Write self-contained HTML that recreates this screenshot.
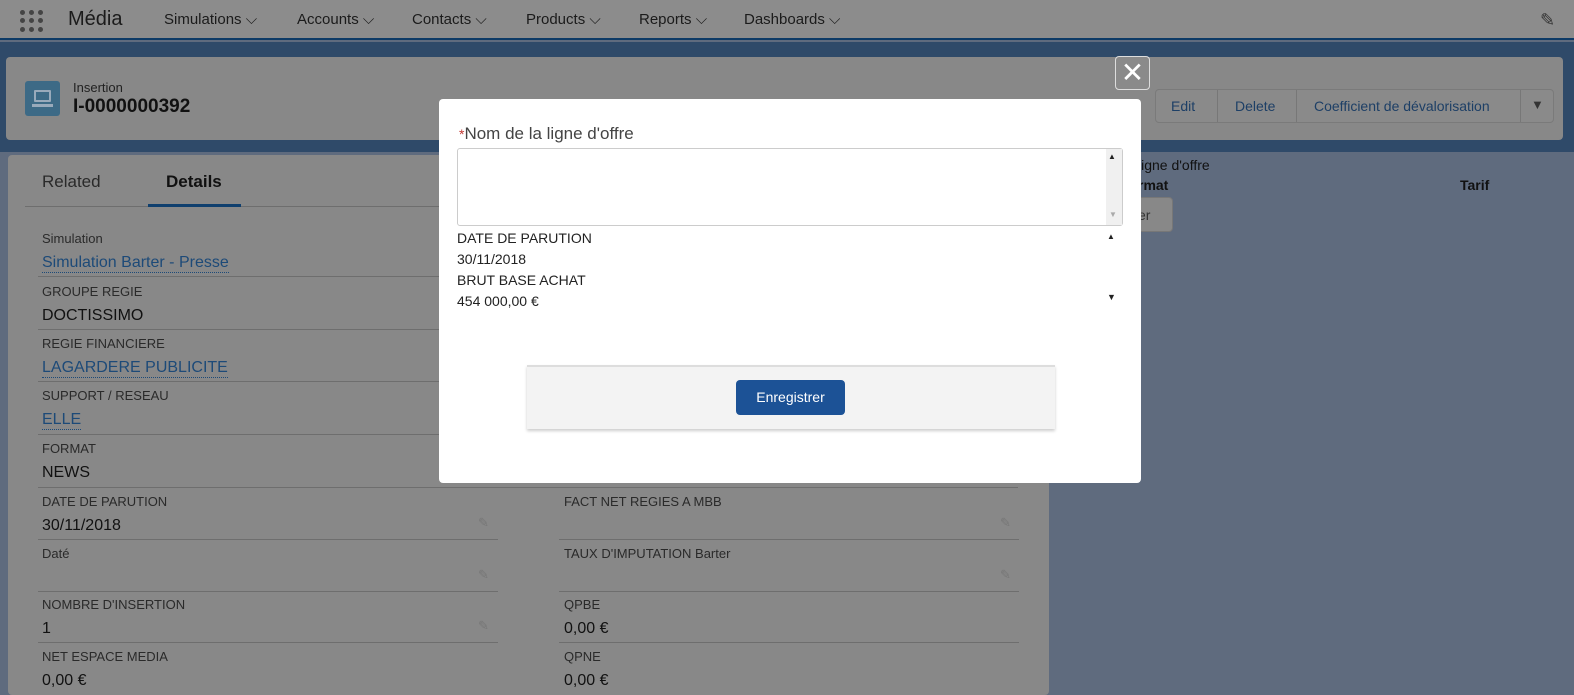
<!DOCTYPE html>
<html><head><meta charset="utf-8"><style>
*{box-sizing:border-box;margin:0;padding:0}
body{width:1574px;height:686px;overflow:hidden;background:#5f6b7e;font-family:"Liberation Sans",sans-serif;position:relative}
.a{position:absolute}
.nav{left:0;top:0;width:1574px;height:40px;background:#8c8c8c;border-bottom:2px solid #0d3a66}
.nav span{position:absolute;top:11px;font-size:15px;color:#1b1b1b}
.strip{left:0;top:42px;width:1574px;height:110px;background:#2f4a69}
.card{background:#888;border-radius:4px}
.lbl{font-size:13px;color:#2a2a2a}
.val{font-size:16px;color:#111}
.lnk{font-size:16px;color:#1d4a78;border-bottom:1px dotted #1d4a78}
.ln{height:1px;background:#6e6e6e}
.pen{font-size:13px;color:#777}
</style></head><body>
<div class="a nav"></div>
<div class="a" style="left:20px;top:10px;width:24px;height:22px;display:grid;grid-template-columns:repeat(3,6px);gap:3px 3px">
<i style="background:#444;border-radius:50%;width:5px;height:5px"></i><i style="background:#444;border-radius:50%;width:5px;height:5px"></i><i style="background:#444;border-radius:50%;width:5px;height:5px"></i><i style="background:#444;border-radius:50%;width:5px;height:5px"></i><i style="background:#444;border-radius:50%;width:5px;height:5px"></i><i style="background:#444;border-radius:50%;width:5px;height:5px"></i><i style="background:#444;border-radius:50%;width:5px;height:5px"></i><i style="background:#444;border-radius:50%;width:5px;height:5px"></i><i style="background:#444;border-radius:50%;width:5px;height:5px"></i></div>
<div class="a" style="left:68px;top:8px;font-size:20px;color:#1b1b1b">Média</div>
<div class="a" style="left:164px;top:11px;font-size:15px;color:#1b1b1b;word-spacing:0">Simulations ⌵</div>
<div class="a" style="left:297px;top:11px;font-size:15px;color:#1b1b1b">Accounts ⌵</div>
<div class="a" style="left:412px;top:11px;font-size:15px;color:#1b1b1b">Contacts ⌵</div>
<div class="a" style="left:526px;top:11px;font-size:15px;color:#1b1b1b">Products ⌵</div>
<div class="a" style="left:639px;top:11px;font-size:15px;color:#1b1b1b">Reports ⌵</div>
<div class="a" style="left:744px;top:11px;font-size:15px;color:#1b1b1b">Dashboards ⌵</div>
<div class="a" style="left:1540px;top:10px;font-size:18px;color:#333">✎</div>
<div class="a strip"></div>
<div class="a card" style="left:6px;top:57px;width:1557px;height:83px"></div>
<div class="a" style="left:25px;top:81px;width:35px;height:35px;background:#3d6a86;border-radius:3px"></div>
<div class="a" style="left:34px;top:90px;width:17px;height:12px;border:2px solid #9ab;border-radius:1px"></div>
<div class="a" style="left:32px;top:104px;width:21px;height:3px;background:#9ab"></div>
<div class="a" style="left:73px;top:80px;font-size:13px;color:#222">Insertion</div>
<div class="a" style="left:73px;top:96px;font-size:19px;font-weight:bold;color:#111">I-0000000392</div>
<div class="a" style="left:1155px;top:89px;width:399px;height:34px;border:1px solid #7a7a7a;border-radius:4px;background:#8a8a8a;font-size:14px;color:#1d3f66">
<span class="a" style="left:15px;top:8px">Edit</span><span class="a" style="left:61px;top:0;width:1px;height:32px;background:#777"></span>
<span class="a" style="left:79px;top:8px">Delete</span><span class="a" style="left:140px;top:0;width:1px;height:32px;background:#777"></span>
<span class="a" style="left:158px;top:8px">Coefficient de dévalorisation</span><span class="a" style="left:364px;top:0;width:1px;height:32px;background:#777"></span>
<span class="a" style="left:375px;top:7px;color:#333;font-size:13px">▼</span></div>
<div class="a card" style="left:8px;top:155px;width:1041px;height:540px"></div>
<div class="a" style="left:42px;top:172px;font-size:17px;color:#2a2a2a">Related</div>
<div class="a" style="left:166px;top:172px;font-size:17px;font-weight:bold;color:#111">Details</div>
<div class="a ln" style="left:25px;top:206px;width:1000px"></div>
<div class="a" style="left:148px;top:204px;width:93px;height:3px;background:#0f3f6e"></div>
<div class="a lbl" style="left:42px;top:231px">Simulation</div><div class="a lnk" style="left:42px;top:254px">Simulation Barter - Presse</div><div class="a ln" style="left:38px;top:276px;width:460px"></div>
<div class="a lbl" style="left:42px;top:284px">GROUPE REGIE</div><div class="a val" style="left:42px;top:307px">DOCTISSIMO</div><div class="a ln" style="left:38px;top:329px;width:460px"></div>
<div class="a lbl" style="left:42px;top:336px">REGIE FINANCIERE</div><div class="a lnk" style="left:42px;top:359px">LAGARDERE PUBLICITE</div><div class="a ln" style="left:38px;top:381px;width:460px"></div>
<div class="a lbl" style="left:42px;top:388px">SUPPORT / RESEAU</div><div class="a lnk" style="left:42px;top:411px">ELLE</div><div class="a ln" style="left:38px;top:434px;width:460px"></div>
<div class="a lbl" style="left:42px;top:441px">FORMAT</div><div class="a val" style="left:42px;top:464px">NEWS</div><div class="a ln" style="left:38px;top:487px;width:980px"></div>
<div class="a lbl" style="left:42px;top:494px">DATE DE PARUTION</div><div class="a val" style="left:42px;top:517px">30/11/2018</div><div class="a pen" style="left:478px;top:515px">✎</div><div class="a ln" style="left:38px;top:539px;width:460px"></div>
<div class="a lbl" style="left:564px;top:494px">FACT NET REGIES A MBB</div><div class="a pen" style="left:1000px;top:515px">✎</div><div class="a ln" style="left:559px;top:539px;width:460px"></div>
<div class="a lbl" style="left:42px;top:546px">Daté</div><div class="a pen" style="left:478px;top:567px">✎</div><div class="a ln" style="left:38px;top:591px;width:460px"></div>
<div class="a lbl" style="left:564px;top:546px">TAUX D'IMPUTATION Barter</div><div class="a pen" style="left:1000px;top:567px">✎</div><div class="a ln" style="left:559px;top:591px;width:460px"></div>
<div class="a lbl" style="left:42px;top:597px">NOMBRE D'INSERTION</div><div class="a val" style="left:42px;top:620px">1</div><div class="a pen" style="left:478px;top:618px">✎</div><div class="a ln" style="left:38px;top:642px;width:460px"></div>
<div class="a lbl" style="left:564px;top:597px">QPBE</div><div class="a val" style="left:564px;top:620px">0,00 €</div><div class="a ln" style="left:559px;top:642px;width:460px"></div>
<div class="a lbl" style="left:42px;top:649px">NET ESPACE MEDIA</div><div class="a val" style="left:42px;top:672px">0,00 €</div>
<div class="a lbl" style="left:564px;top:649px">QPNE</div><div class="a val" style="left:564px;top:672px">0,00 €</div>
<div class="a" style="left:1138px;top:157px;font-size:14px;color:#111">ligne d'offre</div>
<div class="a" style="left:1138px;top:177px;font-size:14px;font-weight:bold;color:#111">rmat</div>
<div class="a" style="left:1460px;top:177px;font-size:14px;font-weight:bold;color:#111">Tarif</div>
<div class="a" style="left:1120px;top:197px;width:53px;height:35px;background:#888;border:1px solid #777;border-radius:4px;font-size:14px;color:#333;padding:9px 0 0 17px">er</div>
<div class="a" style="left:439px;top:99px;width:702px;height:384px;background:#fff;border-radius:4px"></div>
<div class="a" style="left:1115px;top:56px;width:35px;height:34px;border:1px solid #ddd;border-radius:4px;background:#8a8a8a;color:#fff;font-size:28px;line-height:31px;text-align:center">✕</div>
<div class="a" style="left:459px;top:124px;font-size:17px;color:#444"><span style="color:#c23934;font-size:14px">*</span>Nom de la ligne d'offre</div>
<div class="a" style="left:457px;top:148px;width:666px;height:78px;border:1px solid #ccc;border-radius:3px"></div>
<div class="a" style="left:1106px;top:149px;width:16px;height:76px;background:#f0f0f0"></div>
<div class="a" style="left:1108px;top:152px;font-size:8px;color:#222">▲</div>
<div class="a" style="left:1109px;top:210px;font-size:8px;color:#aaa">▼</div>
<div class="a" style="left:457px;top:228px;font-size:14px;color:#222;line-height:21px">DATE DE PARUTION<br>30/11/2018<br>BRUT BASE ACHAT<br>454 000,00 €</div>
<div class="a" style="left:1107px;top:232px;font-size:8px;color:#222">▲</div>
<div class="a" style="left:1107px;top:292px;font-size:9px;color:#222">▼</div>
<div class="a" style="left:527px;top:365px;width:528px;height:64px;background:#f3f3f3;border-top:2px solid #ddd;box-shadow:0 2px 3px rgba(0,0,0,.2)"></div>
<div class="a" style="left:736px;top:380px;width:109px;height:35px;background:#1c5296;border-radius:4px;color:#fff;font-size:14px;text-align:center;line-height:34px">Enregistrer</div>
</body></html>
